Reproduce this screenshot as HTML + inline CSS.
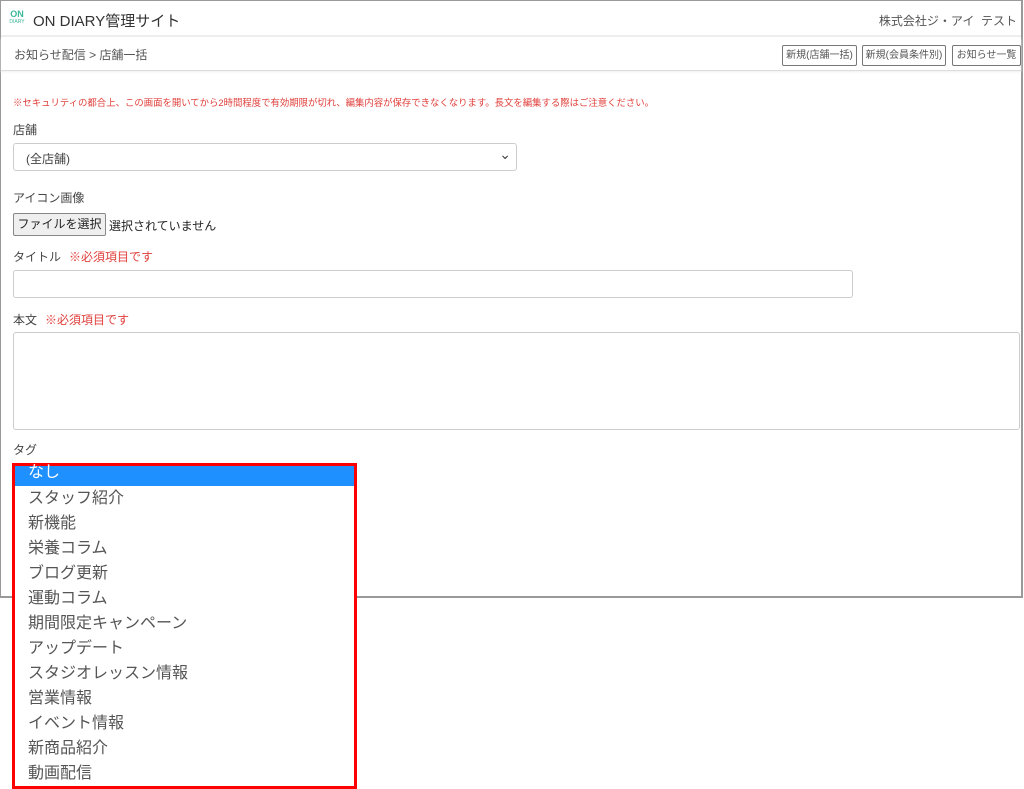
<!DOCTYPE html>
<html><head><meta charset="utf-8"><style>
*{box-sizing:border-box;margin:0;padding:0}
body{width:1024px;height:789px;background:#fff;font-family:"Liberation Sans","Noto Sans CJK JP",sans-serif;color:#444;position:relative;overflow:hidden}
.frame{position:absolute;left:0;top:0;width:1023px;height:598px;border:2px solid #999;border-top:1px solid #999;border-left:1px solid #999}
.hdr{position:absolute;left:1px;top:1px;width:1020px;height:36px;border-bottom:2px solid #eee}
.logo{position:absolute;left:7px;top:9px;width:18px;height:20px;color:#3cb89a;font-size:9px;line-height:9px;font-weight:bold;text-align:center}
.logo small{display:block;font-size:5px;line-height:6px;font-weight:normal}
.title{position:absolute;left:32px;top:9px;font-size:15px;color:#333}
.user{position:absolute;right:4px;top:11px;font-size:12px;color:#555}
.bc{position:absolute;left:1px;top:38px;width:1020px;height:33px;border-bottom:1px solid #ddd;box-shadow:0 1px 2px #eee}
.bc span{position:absolute;left:13px;top:8px;font-size:12px;color:#555}
.btn{position:absolute;top:7px;height:21px;border:1px solid #777;border-radius:2px;font-size:10px;line-height:19px;text-align:center;color:#555}
.lbl{position:absolute;left:13px;font-size:12px;color:#444}
.req{color:#e0403c;margin-left:8px}
.box{position:absolute;border:1px solid #ccc;border-radius:3px;background:#fff}
.list{position:absolute;left:12px;top:463px;width:345px;height:326px;border:3px solid #f00;background:#fff}
.list div{height:25px;font-size:16px;line-height:26px;padding-left:13px;color:#555}
.list .sel{background:#1e90ff;color:#fff;height:20px;line-height:14px}
</style></head><body>
<div class="frame"></div>
<div class="hdr"><div class="logo">ON<small>DIARY</small></div><div class="title">ON DIARY管理サイト</div><div class="user">株式会社ジ・アイ&nbsp; テスト</div></div>
<div class="bc"><span>お知らせ配信 &gt; 店舗一括</span>
<div class="btn" style="left:781px;width:75px">新規(店舗一括)</div>
<div class="btn" style="left:861px;width:84px">新規(会員条件別)</div>
<div class="btn" style="left:951px;width:69px">お知らせ一覧</div></div>
<div style="position:absolute;left:13px;top:95px;font-size:9.4px;color:#e0403c;white-space:nowrap">※セキュリティの都合上、この画面を開いてから2時間程度で有効期限が切れ、編集内容が保存できなくなります。長文を編集する際はご注意ください。</div>
<div class="lbl" style="top:121px">店舗</div>
<div class="box" style="left:13px;top:143px;width:504px;height:28px;font-size:12px;padding:6px 12px;color:#444">(全店舗)<span style="position:absolute;right:5px;top:2px;font-size:14px">&#8964;</span></div>
<div class="lbl" style="top:189px">アイコン画像</div>
<div style="position:absolute;left:13px;top:213px;width:93px;height:23px;border:1px solid #888;border-radius:2px;background:#efefef;font-size:12px;line-height:21px;text-align:center;color:#222">ファイルを選択</div>
<div style="position:absolute;left:109px;top:217px;font-size:12px;color:#222">選択されていません</div>
<div class="lbl" style="top:248px">タイトル<span class="req">※必須項目です</span></div>
<div class="box" style="left:13px;top:270px;width:840px;height:28px"></div>
<div class="lbl" style="top:311px">本文<span class="req">※必須項目です</span></div>
<div class="box" style="left:13px;top:332px;width:1007px;height:98px"></div>
<div class="lbl" style="top:441px">タグ</div>
<div class="list"><div class="sel">なし</div><div>スタッフ紹介</div><div>新機能</div><div>栄養コラム</div><div>ブログ更新</div><div>運動コラム</div><div>期間限定キャンペーン</div><div>アップデート</div><div>スタジオレッスン情報</div><div>営業情報</div><div>イベント情報</div><div>新商品紹介</div><div>動画配信</div></div>
</body></html>
